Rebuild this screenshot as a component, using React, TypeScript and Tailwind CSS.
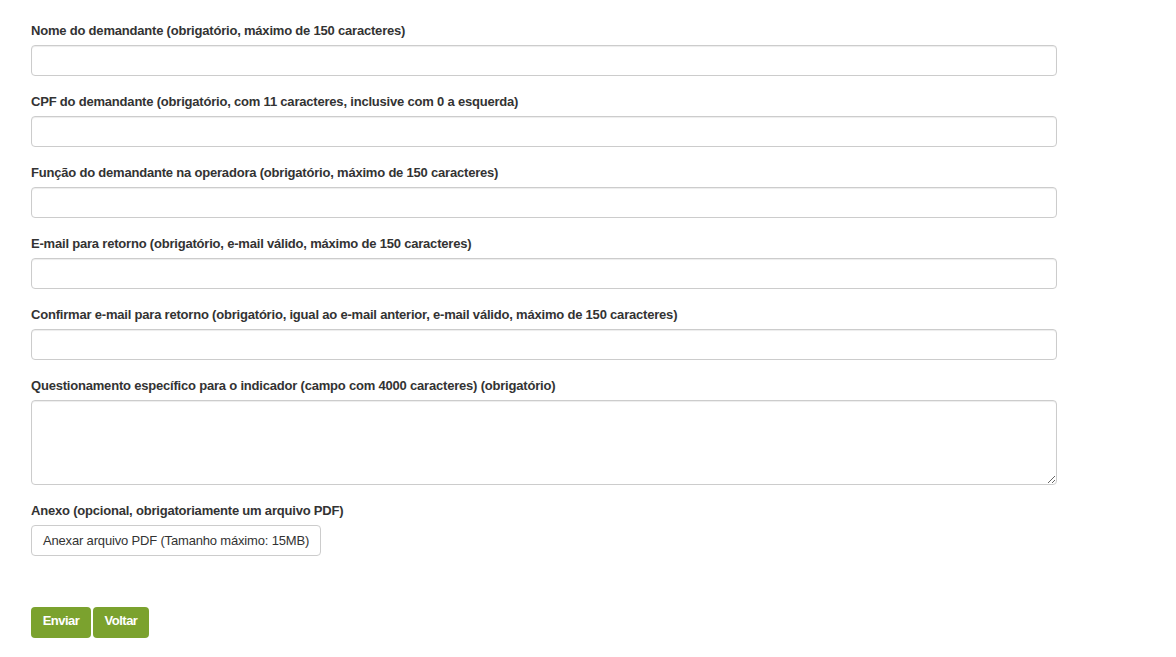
import React from 'react'

const fields = [
  'Nome do demandante (obrigatório, máximo de 150 caracteres)',
  'CPF do demandante (obrigatório, com 11 caracteres, inclusive com 0 a esquerda)',
  'Função do demandante na operadora (obrigatório, máximo de 150 caracteres)',
  'E-mail para retorno (obrigatório, e-mail válido, máximo de 150 caracteres)',
  'Confirmar e-mail para retorno (obrigatório, igual ao e-mail anterior, e-mail válido, máximo de 150 caracteres)',
]

const inputClass =
  'block w-full rounded-[4px] border border-[#cccccc] bg-white px-3 text-[13px] text-[#555] shadow-[inset_0_1px_1px_rgba(0,0,0,0.075)] outline-none'

export default function App() {
  return (
    <div className="min-h-screen bg-white px-[31px] pt-5 font-['Liberation_Sans',Arial,sans-serif] text-[13px] leading-5 tracking-[-0.2px] text-[#333]">
      <form className="w-[1026px]" onSubmit={(e) => e.preventDefault()}>
        {fields.map((label) => (
          <div key={label} className="mb-[15px]">
            <label className="mb-[4px] block leading-[21px] font-bold">{label}</label>
            <input type="text" className={`${inputClass} h-[31px]`} />
          </div>
        ))}

        <div className="mb-[15px]">
          <label className="mb-[4px] block leading-[21px] font-bold">
            Questionamento específico para o indicador (campo com 4000 caracteres) (obrigatório)
          </label>
          <textarea className={`${inputClass} h-[85px] py-1.5`} />
        </div>

        <div>
          <label className="mb-[4px] block leading-[21px] font-bold">
            Anexo (opcional, obrigatoriamente um arquivo PDF)
          </label>
          <button
            type="button"
            className="h-[31px] rounded-[4px] border border-[#cccccc] bg-white px-[11px] text-[13px] tracking-[-0.17px] text-[#333]"
          >
            Anexar arquivo PDF (Tamanho máximo: 15MB)
          </button>
        </div>

        <div className="mt-[51px] flex gap-[2px]">
          <button
            type="submit"
            className="h-[31px] w-[60px] rounded-[4px] bg-[#7ba22e] pb-[3px] text-[13px] font-bold tracking-[-0.5px] text-white"
          >
            Enviar
          </button>
          <button
            type="button"
            className="h-[31px] w-[56px] rounded-[4px] bg-[#7ba22e] pb-[3px] text-[13px] font-bold tracking-[-0.5px] text-white"
          >
            Voltar
          </button>
        </div>
      </form>
    </div>
  )
}
